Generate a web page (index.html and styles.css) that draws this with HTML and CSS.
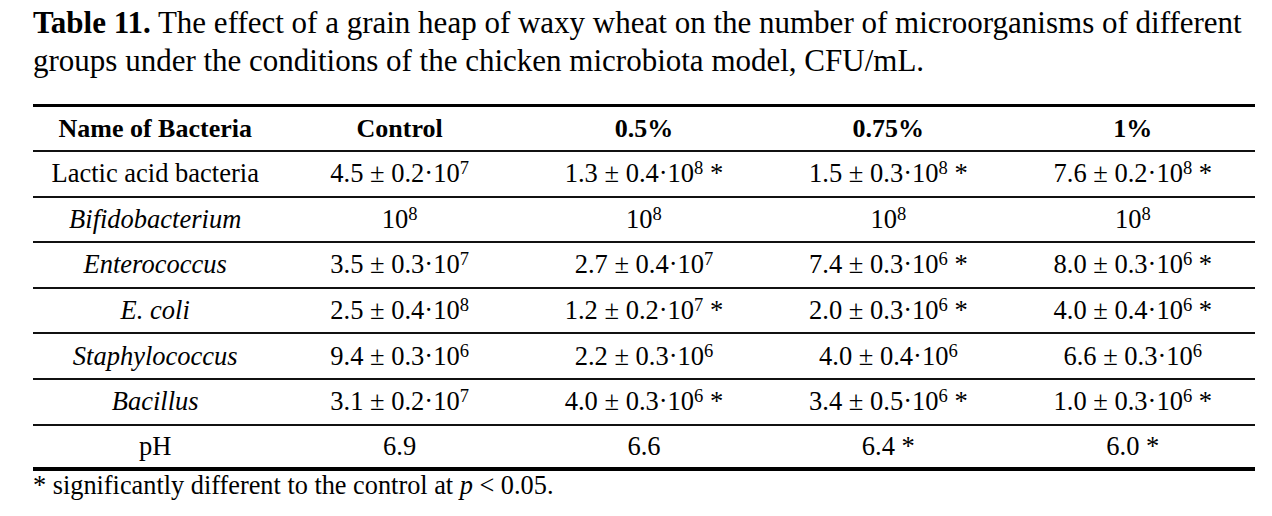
FILE: index.html
```html
<!DOCTYPE html>
<html>
<head>
<meta charset="utf-8">
<link rel="stylesheet" href="styles.css">
</head>
<body>
<div class="page">
  <p class="caption"><b>Table 11.</b> The effect of a grain heap of waxy wheat on the number of microorganisms of different groups under the conditions of the chicken microbiota model, CFU/mL.</p>
  <table class="data">
    <thead>
      <tr><th>Name of Bacteria</th><th>Control</th><th>0.5%</th><th>0.75%</th><th>1%</th></tr>
    </thead>
    <tbody>
      <tr><td>Lactic acid bacteria</td><td>4.5 ± 0.2·10<sup>7</sup></td><td>1.3 ± 0.4·10<sup>8</sup> *</td><td>1.5 ± 0.3·10<sup>8</sup> *</td><td>7.6 ± 0.2·10<sup>8</sup> *</td></tr>
      <tr><td><i>Bifidobacterium</i></td><td>10<sup>8</sup></td><td>10<sup>8</sup></td><td>10<sup>8</sup></td><td>10<sup>8</sup></td></tr>
      <tr><td><i>Enterococcus</i></td><td>3.5 ± 0.3·10<sup>7</sup></td><td>2.7 ± 0.4·10<sup>7</sup></td><td>7.4 ± 0.3·10<sup>6</sup> *</td><td>8.0 ± 0.3·10<sup>6</sup> *</td></tr>
      <tr><td><i>E. coli</i></td><td>2.5 ± 0.4·10<sup>8</sup></td><td>1.2 ± 0.2·10<sup>7</sup> *</td><td>2.0 ± 0.3·10<sup>6</sup> *</td><td>4.0 ± 0.4·10<sup>6</sup> *</td></tr>
      <tr><td><i>Staphylococcus</i></td><td>9.4 ± 0.3·10<sup>6</sup></td><td>2.2 ± 0.3·10<sup>6</sup></td><td>4.0 ± 0.4·10<sup>6</sup></td><td>6.6 ± 0.3·10<sup>6</sup></td></tr>
      <tr><td><i>Bacillus</i></td><td>3.1 ± 0.2·10<sup>7</sup></td><td>4.0 ± 0.3·10<sup>6</sup> *</td><td>3.4 ± 0.5·10<sup>6</sup> *</td><td>1.0 ± 0.3·10<sup>6</sup> *</td></tr>
      <tr class="last"><td>pH</td><td>6.9</td><td>6.6</td><td>6.4 *</td><td>6.0 *</td></tr>
    </tbody>
  </table>
  <p class="note">* significantly different to the control at <i>p</i> &lt; 0.05.</p>
</div>
</body>
</html>
```
FILE: styles.css
```css
html, body {
  margin: 0;
  padding: 0;
  background: #fff;
}
.page {
  width: 1222px;
  padding: 4px 0 0 33px;
  font-family: "Liberation Serif", "Times New Roman", serif;
  color: #000;
}
.caption {
  margin: 0;
  font-size: 31px;
  line-height: 38px;
}
.data {
  width: 1222px;
  margin-top: 24px;
  border-collapse: collapse;
  table-layout: fixed;
  border-top: 3px solid #000;
  border-bottom: 4px solid #000;
  font-size: 26.5px;
}
.data th, .data td {
  height: 43.6px;
  padding: 0;
  text-align: center;
  vertical-align: middle;
  white-space: nowrap;
}
.data thead th {
  height: 43px;
  font-size: 26px;
  font-weight: bold;
  border-bottom: 2px solid #111;
}
.data tbody tr + tr td {
  border-top: 2px solid #111;
}
.data tbody tr.last td {
  height: 41px;
}
.data sup {
  font-size: 0.7em;
  line-height: 0;
  vertical-align: 0.45em;
}
.note {
  margin: 1px 0 0;
  font-size: 26.3px;
  line-height: 28px;
}
```
